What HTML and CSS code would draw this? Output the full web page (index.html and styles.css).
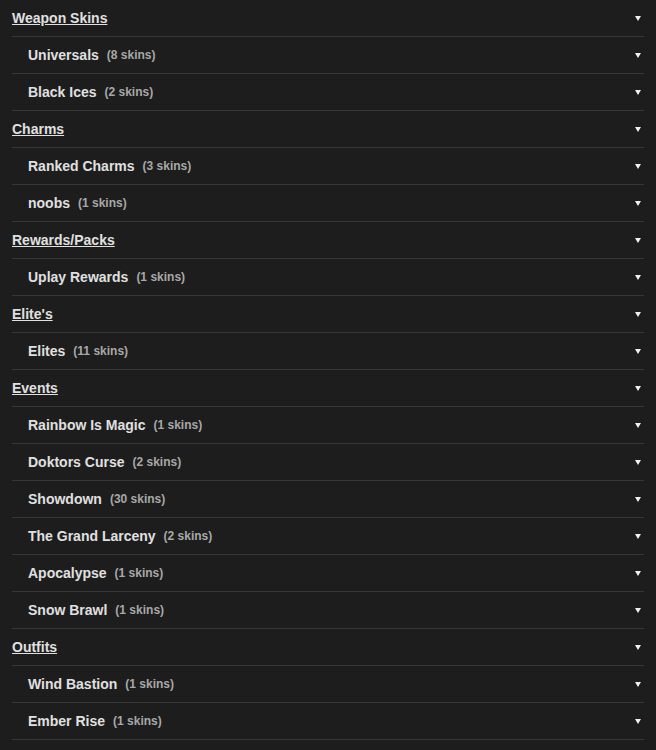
FILE: index.html
```html
<!DOCTYPE html>
<html lang="en">
<head>
  <meta charset="UTF-8" />
  <meta name="viewport" content="width=device-width, initial-scale=1.0"/>
  <title>Skins</title>
  <link rel="stylesheet" href="styles.css">
</head>
<body>

  <ul class="skin-list">
    <li class="row group"><span class="name">Weapon Skins</span><span class="arrow"></span></li>
    <li class="row item"><span class="name">Universals</span><span class="count">(8 skins)</span><span class="arrow"></span></li>
    <li class="row item"><span class="name">Black Ices</span><span class="count">(2 skins)</span><span class="arrow"></span></li>

    <li class="row group"><span class="name">Charms</span><span class="arrow"></span></li>
    <li class="row item"><span class="name">Ranked Charms</span><span class="count">(3 skins)</span><span class="arrow"></span></li>
    <li class="row item"><span class="name">noobs</span><span class="count">(1 skins)</span><span class="arrow"></span></li>

    <li class="row group"><span class="name">Rewards/Packs</span><span class="arrow"></span></li>
    <li class="row item"><span class="name">Uplay Rewards</span><span class="count">(1 skins)</span><span class="arrow"></span></li>

    <li class="row group"><span class="name">Elite's</span><span class="arrow"></span></li>
    <li class="row item"><span class="name">Elites</span><span class="count">(11 skins)</span><span class="arrow"></span></li>

    <li class="row group"><span class="name">Events</span><span class="arrow"></span></li>
    <li class="row item"><span class="name">Rainbow Is Magic</span><span class="count">(1 skins)</span><span class="arrow"></span></li>
    <li class="row item"><span class="name">Doktors Curse</span><span class="count">(2 skins)</span><span class="arrow"></span></li>
    <li class="row item"><span class="name">Showdown</span><span class="count">(30 skins)</span><span class="arrow"></span></li>
    <li class="row item"><span class="name">The Grand Larceny</span><span class="count">(2 skins)</span><span class="arrow"></span></li>
    <li class="row item"><span class="name">Apocalypse</span><span class="count">(1 skins)</span><span class="arrow"></span></li>
    <li class="row item"><span class="name">Snow Brawl</span><span class="count">(1 skins)</span><span class="arrow"></span></li>

    <li class="row group"><span class="name">Outfits</span><span class="arrow"></span></li>
    <li class="row item"><span class="name">Wind Bastion</span><span class="count">(1 skins)</span><span class="arrow"></span></li>
    <li class="row item"><span class="name">Ember Rise</span><span class="count">(1 skins)</span><span class="arrow"></span></li>
  </ul>

</body>
</html>
```

FILE: styles.css
```css
body {
  margin: 0;
  background-color: #1d1d1d;
  font-family: 'Liberation Sans', Arial, sans-serif;
  color: #e0e0e0;
}

.skin-list {
  list-style: none;
  margin: 0 12px;
  padding: 0;
}

.row {
  display: flex;
  align-items: center;
  height: 36px;
  border-bottom: 1px solid #363636;
  font-weight: bold;
}

.name {
  font-size: 14px;
}

.group .name {
  text-decoration: underline;
}

.item {
  padding-left: 16px;
}

.count {
  margin-left: 8px;
  font-size: 12px;
  color: #a8a8a8;
}

.arrow {
  margin-left: auto;
  margin-right: 3px;
  width: 0;
  height: 0;
  border-left: 3px solid transparent;
  border-right: 3px solid transparent;
  border-top: 5px solid #f0f0f0;
}
```
